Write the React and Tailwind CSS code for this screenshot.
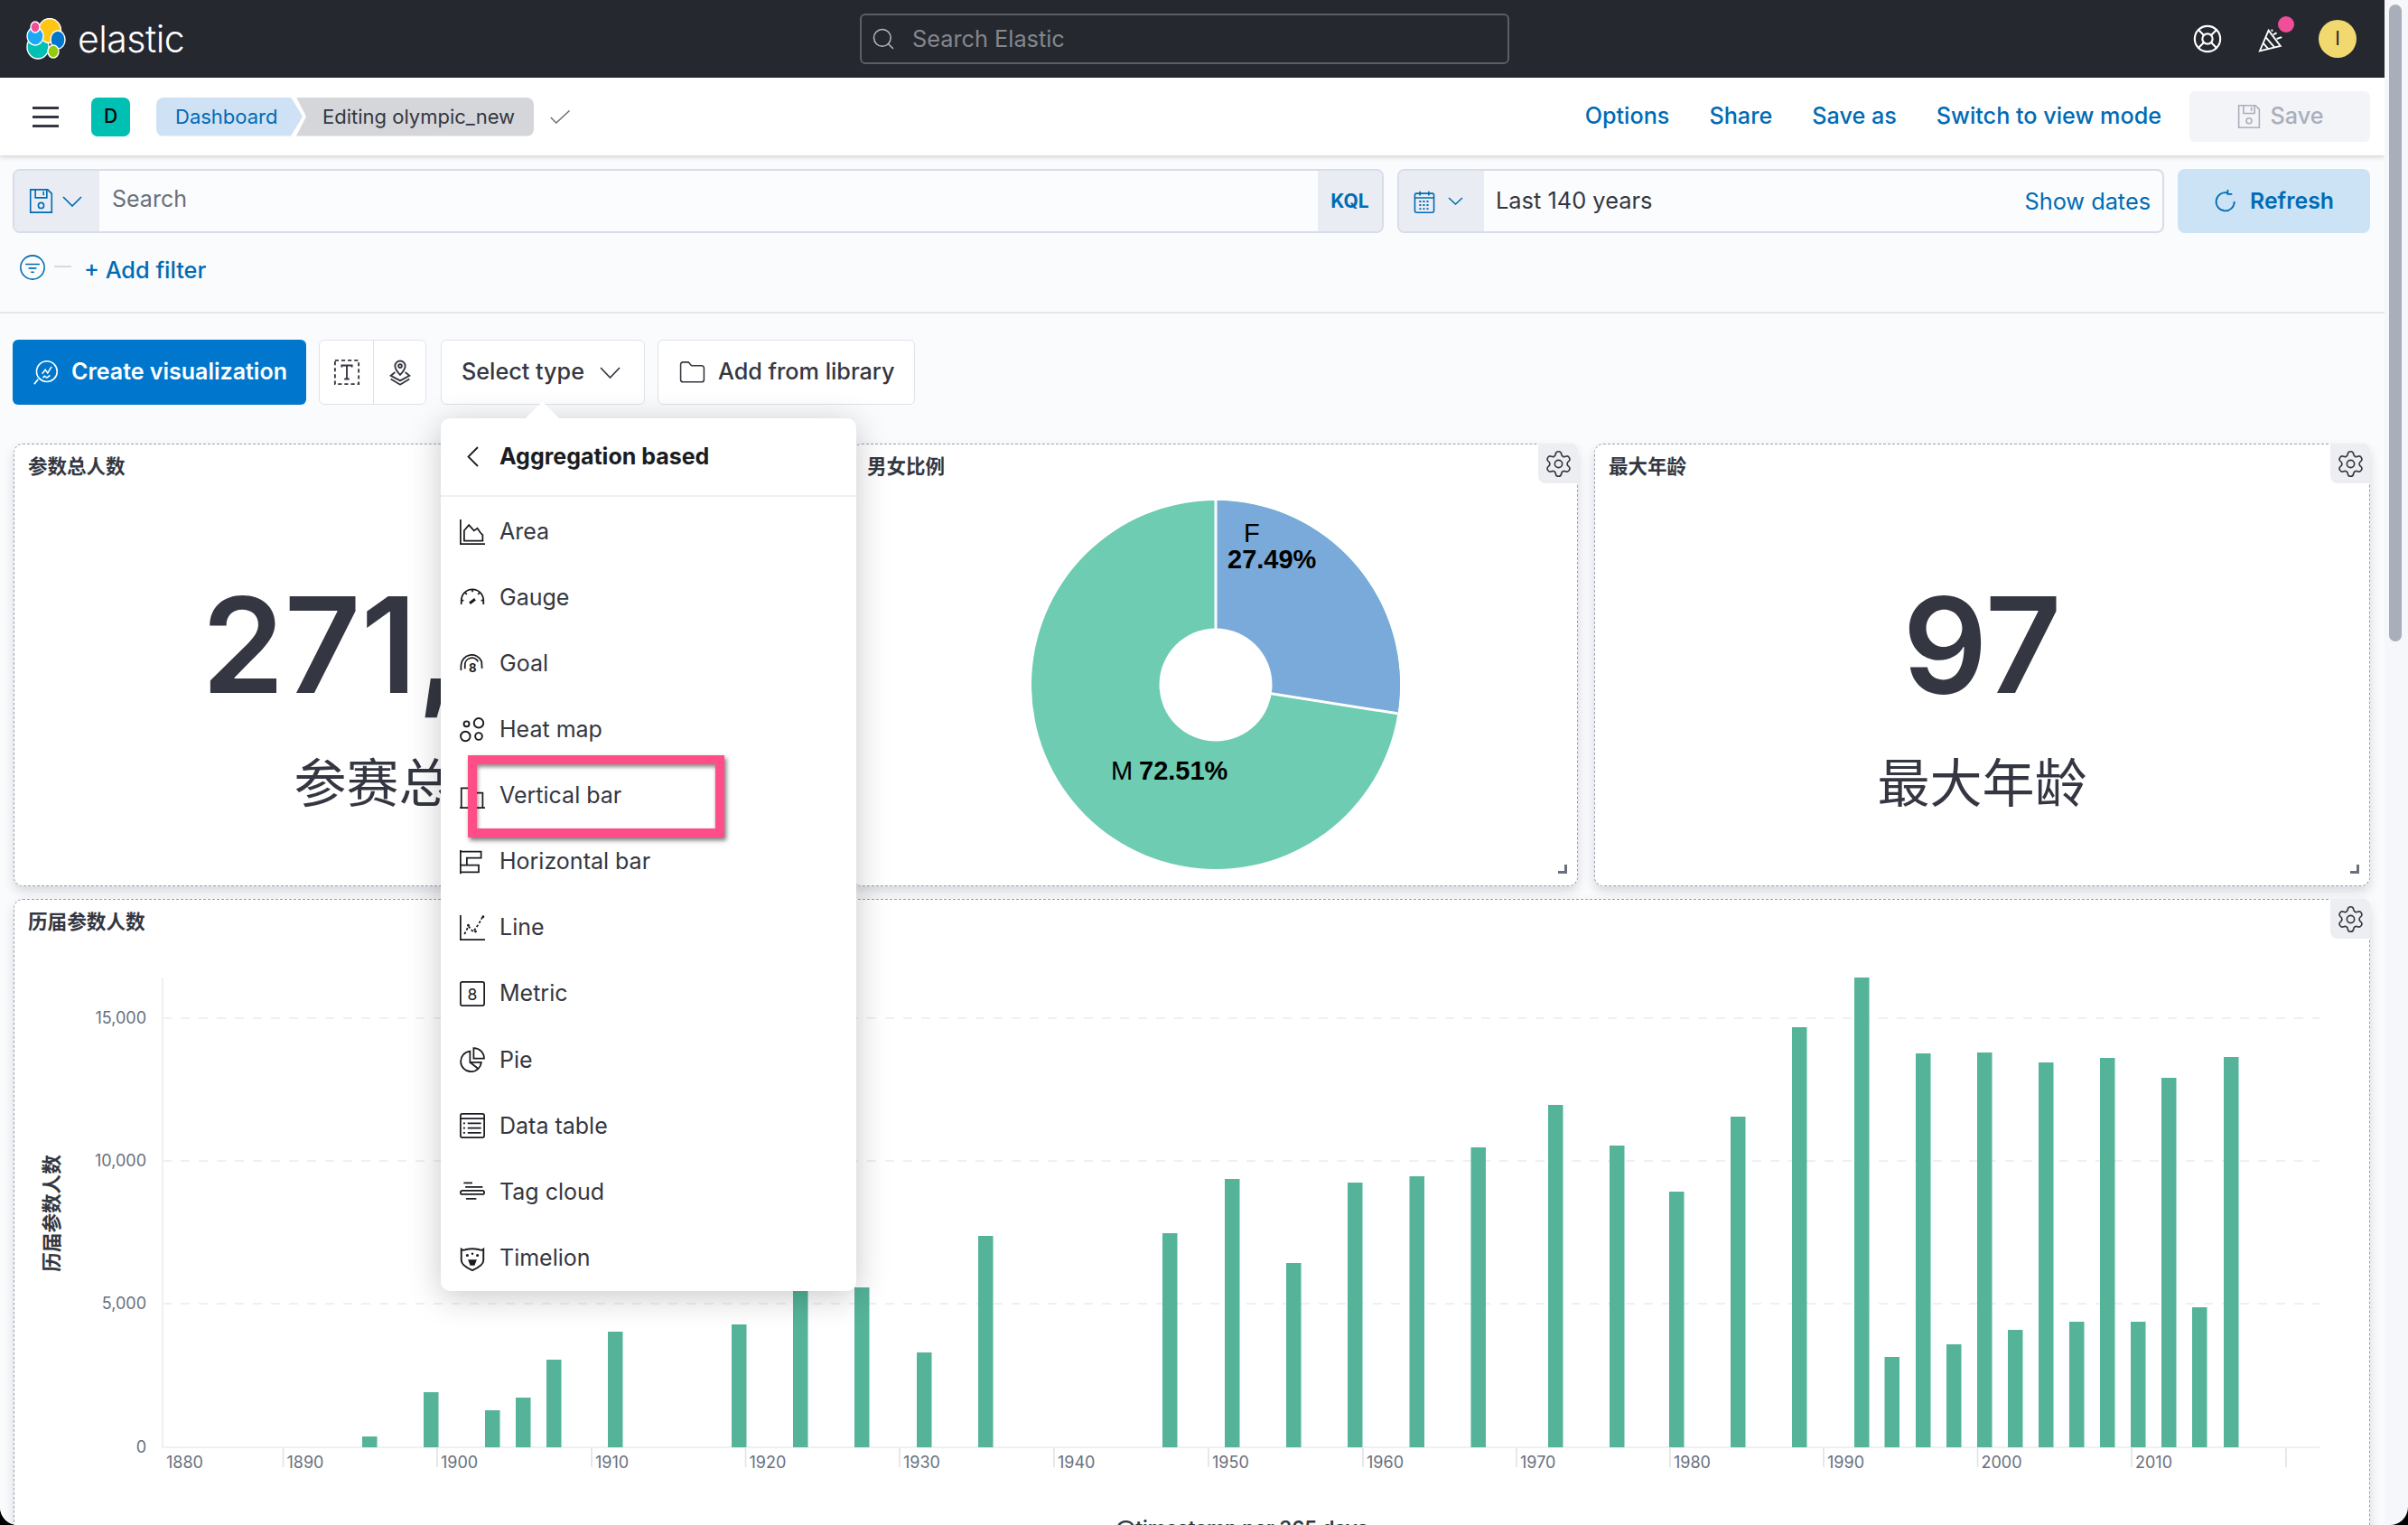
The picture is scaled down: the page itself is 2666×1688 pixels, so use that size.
import React from "react";
import { Settings, Search, Folder, LifeBuoy } from "lucide-react";

const S = ({ size = 28, sw = 1, className = "", children }) => (
  <svg width={size} height={size} viewBox="0 0 16 16" fill="none" stroke="currentColor" strokeWidth={sw} className={className}>
    {children}
  </svg>
);

const Chev = ({ w = 22, h = 12, sw = 1.7, className = "" }) => (
  <svg width={w} height={h} viewBox={`0 0 ${w} ${h}`} fill="none" stroke="currentColor" strokeWidth={sw} className={className}>
    <path d={`M1 1L${w / 2} ${h - 1}L${w - 1} 1`} />
  </svg>
);

const ElasticLogo = () => (
  <svg width="44" height="46" viewBox="0 0 44 46">
    <g stroke="#fff" strokeWidth="1.4">
      <ellipse cx="13" cy="32" rx="12" ry="13" fill="#00bfb3" />
      <ellipse cx="26" cy="14" rx="12.5" ry="13.5" fill="#fec514" />
      <ellipse cx="10" cy="20" rx="9" ry="10" fill="#1ba9f5" />
      <ellipse cx="10" cy="10" rx="5" ry="6" fill="#f04e98" />
      <ellipse cx="35" cy="24" rx="8" ry="10" fill="#0077cc" />
      <ellipse cx="30" cy="37" rx="6" ry="7" fill="#93c90e" />
    </g>
  </svg>
);

const SaveIcon = ({ size = 29 }) => (
  <S size={size} sw={0.9}>
    <path d="M1.500 1h10.500l2.500 2.500V15h-13z" />
    <path d="M4.500 1v5h7V1M9.500 2v2.500" />
    <circle cx="8" cy="10.700" r="1.700" />
  </S>
);

const menuIcons = {
  Area: (
    <S>
      <path d="M.5 0v15.500H16" />
      <path d="M2.800 13.500V7l3-3.500 3.200 3.600 2.200-1.500L13 8.300l1.500 1.500v3.700z" />
    </S>
  ),
  Gauge: (
    <S>
      <path d="M1 12V9.500a7 7 0 0 1 14 0V12" />
      <path d="M8 2.500v1.700M3.300 4.500l1.200 1.200M12.700 4.500l-1.200 1.200M1 9.500h1.500M13.500 9.500H15" />
      <path d="M6.300 11.300l3.400-2.600" strokeWidth="1.700" />
    </S>
  ),
  Goal: (
    <S>
      <path d="M.8 12V8.800a6.800 6.800 0 0 1 13-2.500l.3 4.500" />
      <path d="M3.300 11V8.800a4.400 4.400 0 0 1 8.300-2.300" />
      <text x="8.200" y="13" fontSize="7.500" fontWeight="700" textAnchor="middle" fill="currentColor" stroke="none">8</text>
    </S>
  ),
  "Heat map": (
    <S sw={1.100}>
      <circle cx="4.300" cy="4.200" r="1.700" />
      <circle cx="12" cy="3.600" r="3" />
      <circle cx="3.600" cy="12" r="3" />
      <circle cx="12" cy="12" r="2.200" />
    </S>
  ),
  "Vertical bar": (
    <S>
      <path d="M0 15.500h16" />
      <path d="M1 15.500V3h6.500v12.500M9.500 15.500V6H14.500v9.500" />
    </S>
  ),
  "Horizontal bar": (
    <S>
      <path d="M.5 .5v15" />
      <path d="M.5 1.500H13.500V5.500H4.500V10H.5M4.500 5.500V10H12V14.500H.5" />
    </S>
  ),
  Line: (
    <S>
      <path d="M.5 0v15.500H16" />
      <path d="M3 12l2.500-5 3 3.500 3.500-5 2.500-4.500" strokeDasharray="1.600 1.200" />
      <circle cx="5.400" cy="6.400" r=".8" fill="currentColor" stroke="none" />
      <circle cx="10" cy="10.300" r=".8" fill="currentColor" stroke="none" />
      <circle cx="14.800" cy="1" r=".8" fill="currentColor" stroke="none" />
    </S>
  ),
  Metric: (
    <S>
      <rect x=".5" y=".5" width="15" height="15" rx="1.200" />
      <text x="8" y="11.800" fontSize="10" textAnchor="middle" fill="currentColor" stroke="none">8</text>
    </S>
  ),
  Pie: (
    <S>
      <path d="M6.500 2.600A6.500 6.500 0 1 0 13.600 9.600H6.500z" />
      <path d="M8.800.6a6.500 6.500 0 0 1 6.600 6.600H8.800zM6.500 9.600l5 4" />
    </S>
  ),
  "Data table": (
    <S>
      <rect x=".5" y=".5" width="15" height="15" rx="1.200" />
      <path d="M.5 3.500h15" />
      <path d="M5 6.500h8.500M5 9.500h8.500M5 12.500h8.500" />
      <path d="M2.200 6.500h1.200M2.200 9.500h1.200M2.200 12.500h1.200" />
    </S>
  ),
  "Tag cloud": (
    <S>
      <path d="M2.500 2.500h5.500M3.500 5h11M4 12.500h6.500" />
      <rect x=".5" y="7.300" width="15" height="2.400" rx="1.200" />
    </S>
  ),
  Timelion: (
    <S sw={1.100}>
      <path d="M1 2.200c1.200 1 1.800.5 3 .1 2.500-.6 5.500-.6 8 0 1.200.4 1.800.9 3-.1v7c0 3-3.500 4.800-7 6.300-3.500-1.500-7-3.300-7-6.300z" />
      <circle cx="4.800" cy="6" r=".9" fill="currentColor" stroke="none" />
      <circle cx="11.200" cy="6" r=".9" fill="currentColor" stroke="none" />
      <circle cx="8" cy="5" r=".7" fill="currentColor" stroke="none" />
      <path d="M6 9.300h4l-1 2.600H7z" fill="currentColor" />
    </S>
  ),
};

const items = ["Area", "Gauge", "Goal", "Heat map", "Vertical bar", "Horizontal bar", "Line", "Metric", "Pie", "Data table", "Tag cloud", "Timelion"];

const Gear = () => (
  <div className="absolute right-[-1px] top-[-1px] flex h-[44px] w-[44px] items-center justify-center rounded-bl-[8px] rounded-tr-[8px] bg-[#eceef2] text-[#343741]">
    <Settings size={33} strokeWidth={1.200} />
  </div>
);

const Handle = () => (
  <div className="absolute bottom-[13px] right-[11px] h-[10px] w-[10px] border-b-[3px] border-r-[3px] border-[#69707d]" />
);

const panelCls = "relative rounded-[10px] border border-dashed border-[#98a2b3] bg-white shadow-[0_6px_12px_rgba(52,55,65,0.17)]";

const Title = ({ children }) => (
  <div className="pl-[15px] pt-[9px] text-[21.500px] font-semibold leading-[30px] text-[#343741]">{children}</div>
);

const Metric = ({ title, value, label, className, nudge = "" }) => (
  <div className={`${panelCls} ${className}`}>
    <Title>{title}</Title>
    <div className={`mt-[103px] text-center text-[147px] font-semibold leading-[160px] text-[#343741] ${nudge}`}>{value}</div>
    <div className="mt-[38px] text-center text-[58px] leading-[70px] text-[#343741]">{label}</div>
    <Gear />
    <Handle />
  </div>
);

const Pie = () => (
  <svg width="410" height="410" viewBox="0 0 410 410" className="mx-auto mt-[22px] block">
    <circle cx="205" cy="205" r="204" fill="#6dccb1" />
    <path d="M205 1A204 204 0 0 1 406.500 236.800L205 205Z" fill="#79aad9" />
    <path d="M205 1V205L406.500 236.800" stroke="#fff" strokeWidth="3" fill="none" />
    <circle cx="205" cy="205" r="62.500" fill="#fff" />
    <text x="236" y="47" fontFamily="Liberation Sans" fontSize="29" fill="#000">F</text>
    <text x="218" y="76" fontFamily="Liberation Sans" fontSize="29" fontWeight="700" fill="#000">27.49%</text>
    <text x="89" y="310" fontFamily="Liberation Sans" fontSize="29" fill="#000">M</text>
    <text x="120" y="310" fontFamily="Liberation Sans" fontSize="29" fontWeight="700" fill="#000">72.51%</text>
  </svg>
);

const bars = [
  [409, 1590], [477, 1541], [545, 1561], [579, 1547], [613, 1505], [681, 1474], [818, 1466], [886, 1410], [954, 1425],
  [1023, 1497], [1091, 1368], [1295, 1365], [1364, 1305], [1432, 1398], [1500, 1309], [1568.500, 1302], [1636.500, 1270],
  [1722, 1223], [1790, 1268], [1856, 1319], [1924, 1236], [1992, 1137], [2061, 1082], [2094.500, 1502], [2129, 1166],
  [2163, 1488], [2197, 1165], [2231, 1472], [2265, 1176], [2299, 1463], [2333, 1171], [2367, 1463], [2401, 1193],
  [2435, 1447], [2470, 1170],
];
const ticks = [[313.500, "1890"], [484, "1900"], [655, "1910"], [825.500, "1920"], [996, "1930"], [1167, "1940"], [1338, "1950"], [1509, "1960"], [1679, "1970"], [1849, "1980"], [2019, "1990"], [2189.500, "2000"], [2360, "2010"], [2531, ""]];

const Chart = () => (
  <svg width="2607" height="760" viewBox="16 996 2607 760" className="block">
    {[1127, 1285, 1443].map((y) => (
      <path key={y} d={`M180 ${y}H2568`} stroke="#eef0f3" strokeWidth="2" strokeDasharray="10 10" />
    ))}
    <path d="M180 1082V1602H2568" stroke="#eef0f3" strokeWidth="2" fill="none" />
    {bars.map(([x, t]) => (
      <rect key={x} x={x - 8} y={t} width="16.500" height={1602 - t} fill="#54b399" />
    ))}
    {ticks.map(([x, l]) => (
      <g key={x}>
        <path d={`M${x} 1603V1624`} stroke="#dfe1e6" strokeWidth="1.500" />
        {l && <text x={x + 4} y="1625" fontSize="18" fill="#69707d">{l}</text>}
      </g>
    ))}
    <text x="184" y="1625" fontSize="18" fill="#69707d">1880</text>
    {[["15,000", 1127], ["10,000", 1285], ["5,000", 1443], ["0", 1602]].map(([l, y]) => (
      <text key={l} x="162" y={y + 6} textAnchor="end" fontSize="18" fill="#69707d">{l}</text>
    ))}
    <text transform="translate(65 1343) rotate(-90)" textAnchor="middle" fontSize="21.600" fontWeight="600" fill="#343741">历届参数人数</text>
    <text x="1375" y="1699" textAnchor="middle" fontSize="22" fontWeight="600" fill="#343741">@timestamp per 365 days</text>
  </svg>
);

export default function App() {
  return (
    <div className="h-[1688px] w-full overflow-hidden bg-black [font-family:Inter,'Noto_Sans_CJK_SC',sans-serif]">
      <div className="flex h-[1688px] overflow-hidden rounded-b-[20px] bg-[#f5f7fa]">
        <div className="relative w-[2640px] shrink-0 overflow-hidden bg-[#fafbfd]">
          {/* top bar */}
          <header className="flex h-[86px] items-center bg-[#25282f]">
            <div className="flex w-[952px] shrink-0 items-center pl-[29px]">
              <ElasticLogo />
              <span className="ml-[13px] text-[41px] font-light leading-none tracking-[-0.5px] text-white">elastic</span>
            </div>
            <div className="flex h-[56px] w-[719px] shrink-0 items-center rounded-[6px] border-2 border-[#5c5f66] pl-[10px]">
              <Search size={28} strokeWidth={1.300} className="text-[#b6b8bc]" />
              <span className="ml-[18px] text-[25.300px] text-[#84878d]">Search Elastic</span>
            </div>
            <div className="ml-auto flex items-center pr-[31px]">
              <LifeBuoy size={34} strokeWidth={1.500} className="text-white" />
              <div className="relative ml-[39px] text-white">
                <svg width="30" height="30" viewBox="0 0 16 16" fill="none" stroke="currentColor" strokeWidth="1">
                  <path d="M1 15.200 6.200 3l7 9.200zM3 10.500l3 3.400M4.500 7l5.200 6" />
                  <path d="M9 5.500l2-1M11 8l3-1M8 2.500l.5 1" />
                </svg>
                <span className="absolute right-[-10px] top-[-10px] h-[18px] w-[18px] rounded-full bg-[#f04e98]" />
              </div>
              <div className="ml-[37px] flex h-[42px] w-[42px] items-center justify-center rounded-full bg-[#f1d86f] text-[21px] text-[#25282f]">I</div>
            </div>
          </header>

          {/* app bar */}
          <div className="relative z-10 flex h-[86px] items-center bg-white pl-[36px] pr-[16px] shadow-[0_2px_5px_rgba(52,55,65,0.2)]">
            <div className="flex h-[23px] w-[29px] flex-col justify-between">
              <span className="h-[3px] bg-[#343741]" />
              <span className="h-[3px] bg-[#343741]" />
              <span className="h-[3px] bg-[#343741]" />
            </div>
            <div className="ml-[36px] flex h-[43px] w-[43px] items-center justify-center rounded-[7px] bg-[#00bfb3] text-[21px] font-medium text-black">D</div>
            <div className="ml-[29px] flex h-[43px] w-[162px] items-center rounded-l-[8px] bg-[#cfe1f5] pl-[21px] text-[22px] text-[#006bb4] [clip-path:polygon(0_0,calc(100%-13px)_0,100%_50%,calc(100%-13px)_100%,0_100%)]">Dashboard</div>
            <div className="-ml-[7px] flex h-[43px] w-[263px] items-center rounded-r-[8px] bg-[#d5d6da] pl-[29px] text-[22px] text-[#343741] [clip-path:polygon(0_0,100%_0,100%_100%,0_100%,11px_50%)]">Editing olympic_new</div>
            <svg width="22" height="15" viewBox="0 0 22 15" fill="none" stroke="#69707d" strokeWidth="1.500" className="ml-[18px]">
              <path d="M.8 8l6 6L21.500 .5" />
            </svg>
            <div className="ml-auto flex items-center gap-[44px] text-[25.200px] font-medium text-[#006bb4]">
              <span>Options</span>
              <span>Share</span>
              <span>Save as</span>
              <span>Switch to view mode</span>
            </div>
            <div className="ml-[31px] flex h-[56px] w-[200px] items-center justify-center gap-[10px] rounded-[6px] bg-[#f3f4f7] text-[25.200px] font-medium text-[#a9afbb]">
              <SaveIcon size={28} />
              Save
            </div>
          </div>

          {/* query bar */}
          <div className="flex pl-[14px] pr-[16px] pt-[15px]">
            <div className="flex h-[71px] w-[1518px] overflow-hidden rounded-[8px] border-2 border-[#d8dce8] bg-[#fbfcfd]">
              <div className="flex w-[94px] items-center gap-[9px] bg-[#e9edf3] pl-[15px] text-[#006bb4]">
                <SaveIcon size={29} />
                <Chev w={22} h={12} />
              </div>
              <div className="flex flex-1 items-center pb-[3px] pl-[14px] text-[25px] text-[#69707d]">Search</div>
              <div className="flex w-[71px] items-center justify-center bg-[#e9edf3] text-[21px] font-bold text-[#006bb4]">KQL</div>
            </div>
            <div className="ml-[15px] flex h-[71px] w-[849px] overflow-hidden rounded-[8px] border-2 border-[#d8dce8] bg-[#fbfcfd]">
              <div className="flex w-[94px] items-center gap-[13px] bg-[#e9edf3] pl-[15px] text-[#006bb4]">
                <svg width="26" height="28" viewBox="0 0 16 16" fill="none" stroke="currentColor" strokeWidth="1">
                  <rect x="1.500" y="2.500" width="13" height="13" rx="1" />
                  <path d="M1.500 5.500h13M5 1v3M11 1v3" />
                  <path d="M4.500 8h7M4.500 10.500h7M4.500 13h7" strokeDasharray="1.300 1.200" strokeWidth="1.200" />
                </svg>
                <Chev w={17} h={9} sw={1.500} />
              </div>
              <span className="flex items-center pl-[13px] text-[25.400px] text-[#343741]">Last 140 years</span>
              <span className="ml-auto flex items-center pr-[13px] text-[25.300px] text-[#006bb4]">Show dates</span>
            </div>
            <div className="ml-[15px] flex h-[71px] w-[213px] items-center justify-center gap-[14px] rounded-[8px] bg-[#cce2f5] text-[24.800px] font-semibold text-[#006bb4]">
              <svg width="26" height="26" viewBox="0 0 16 16" fill="none" stroke="currentColor" strokeWidth="1.100">
                <path d="M9.500 2.200A6.200 6.200 0 1 0 14 8" />
                <path d="M9.500 0v3h3" />
              </svg>
              Refresh
            </div>
          </div>

          {/* filter row */}
          <div className="flex h-[89px] items-center border-b-2 border-[#e3e6ec] pb-[5px] pl-[22px]">
            <div className="mt-[-6px] text-[#006bb4]">
              <S size={28} sw={0.9}>
                <circle cx="8" cy="8" r="7.500" />
                <path d="M3.500 6h9M5.500 8.500h5M7 11h2" />
              </S>
            </div>
            <span className="ml-[10px] mt-[-8px] h-[2px] w-[19px] bg-[#d3dae6]" />
            <span className="ml-[14px] text-[25.300px] font-medium text-[#006bb4]">+ Add filter</span>
          </div>

          {/* toolbar */}
          <div className="mt-[29px] flex h-[72px] pl-[14px] text-[25.200px] font-medium text-[#343741]">
            <div className="flex w-[325px] items-center gap-[14px] rounded-[6px] bg-[#0077cc] pl-[23px] text-[25px] font-semibold text-white">
              <svg width="28" height="30" viewBox="0 0 16 16" fill="none" stroke="currentColor" strokeWidth=".9">
                <circle cx="8.500" cy="7.500" r="6.500" />
                <path d="M.5 15.500l2.500-3M5.500 9l2-2.500 1.500 2 2.500-4" />
                <path d="M6 11.500l1-1 1.500 1 2-1.500" />
              </svg>
              Create visualization
            </div>
            <div className="ml-[14px] flex w-[119px] overflow-hidden rounded-[6px] border border-[#dfe3ea] bg-white">
              <div className="flex w-[60px] items-center justify-center border-r border-[#dfe3ea]">
                <S size={30}>
                  <rect x="1" y="1" width="14" height="14" strokeDasharray="2.200 1.600" />
                  <path d="M5 5V4h6v1M8 4v8M6.500 12h3" />
                </S>
              </div>
              <div className="flex flex-1 items-center justify-center">
                <S size={30}>
                  <path d="M8 9.500C6 7.500 5 5.800 5 4.300a3 3 0 0 1 6 0C11 5.800 10 7.500 8 9.500z" />
                  <circle cx="8" cy="4.300" r="1" />
                  <path d="M5 8L2.500 10 8 13l5.500-3L11 8M2.500 12 8 15.300l5.500-3.300" />
                </S>
              </div>
            </div>
            <div className="relative ml-[16px] flex w-[226px] items-center rounded-[6px] border border-[#dfe3ea] bg-white pl-[22px]">
              Select type
              <Chev w={23} h={13} className="ml-[17px]" />
            </div>
            <div className="ml-[14px] flex w-[285px] items-center rounded-[6px] border border-[#dfe3ea] bg-white pl-[22px]">
              <Folder size={31} strokeWidth={1.200} />
              <span className="ml-[13px]">Add from library</span>
            </div>
          </div>

          {/* dashboard panels */}
          <div className="mt-[43px] flex gap-[18px] pl-[15px]">
            <Metric className="h-[490px] w-[911px]" nudge="pr-[4px]" title="参数总人数" value="271,116" label="参赛总人数" />
            <div className={`${panelCls} h-[490px] w-[803px]`}>
              <Title>男女比例</Title>
              <Pie />
              <Gear />
              <Handle />
            </div>
            <Metric className="h-[490px] w-[859px]" title="最大年龄" value="97" label="最大年龄" />
          </div>
          <div className="ml-[15px] mr-[16px] mt-[14px]">
            <div className={`${panelCls} h-[800px]`}>
              <div className="absolute left-[15px] top-[9px] text-[21.600px] font-semibold leading-[30px] text-[#343741]">历届参数人数</div>
              <Chart />
              <Gear />
            </div>
          </div>

          {/* popover */}
          <div className="absolute left-[488px] top-[463px] z-20 w-[460px] rounded-[10px] bg-white shadow-[0_6px_36px_rgba(0,0,0,0.22)]">
            <div className="absolute left-[99px] top-[-13px] h-[27px] w-[27px] rotate-45 bg-white" />
            <div className="relative flex h-[87px] items-center border-b-2 border-[#eef0f3] pl-[29px] text-[25px] font-bold text-[#1a1c21]">
              <svg width="13" height="23" viewBox="0 0 13 23" fill="none" stroke="currentColor" strokeWidth="1.800">
                <path d="M12 1L1.500 11.500L12 22" />
              </svg>
              <span className="ml-[23px]">Aggregation based</span>
            </div>
            <div className="pt-[2px]">
              {items.map((t) => (
                <div key={t} className="flex h-[73.100px] items-center pl-[21px] text-[25px] text-[#343741]">
                  <span className="text-[#1a1c21]">{menuIcons[t]}</span>
                  <span className="ml-[16px]">{t}</span>
                </div>
              ))}
            </div>
          </div>

          {/* annotation */}
          <div className="absolute left-[518px] top-[836px] z-30 h-[91px] w-[284px] border-[10px] border-[#ff4d87] shadow-[2px_3px_5px_rgba(0,0,0,0.55),inset_1px_3px_4px_rgba(0,0,0,0.45)]" />
        </div>

        {/* scrollbar */}
        <div className="w-[26px] shrink-0 pl-[5px] pt-[5px]">
          <div className="h-[705px] w-[14px] rounded-full bg-[#a8afba]" />
        </div>
      </div>
    </div>
  );
}
